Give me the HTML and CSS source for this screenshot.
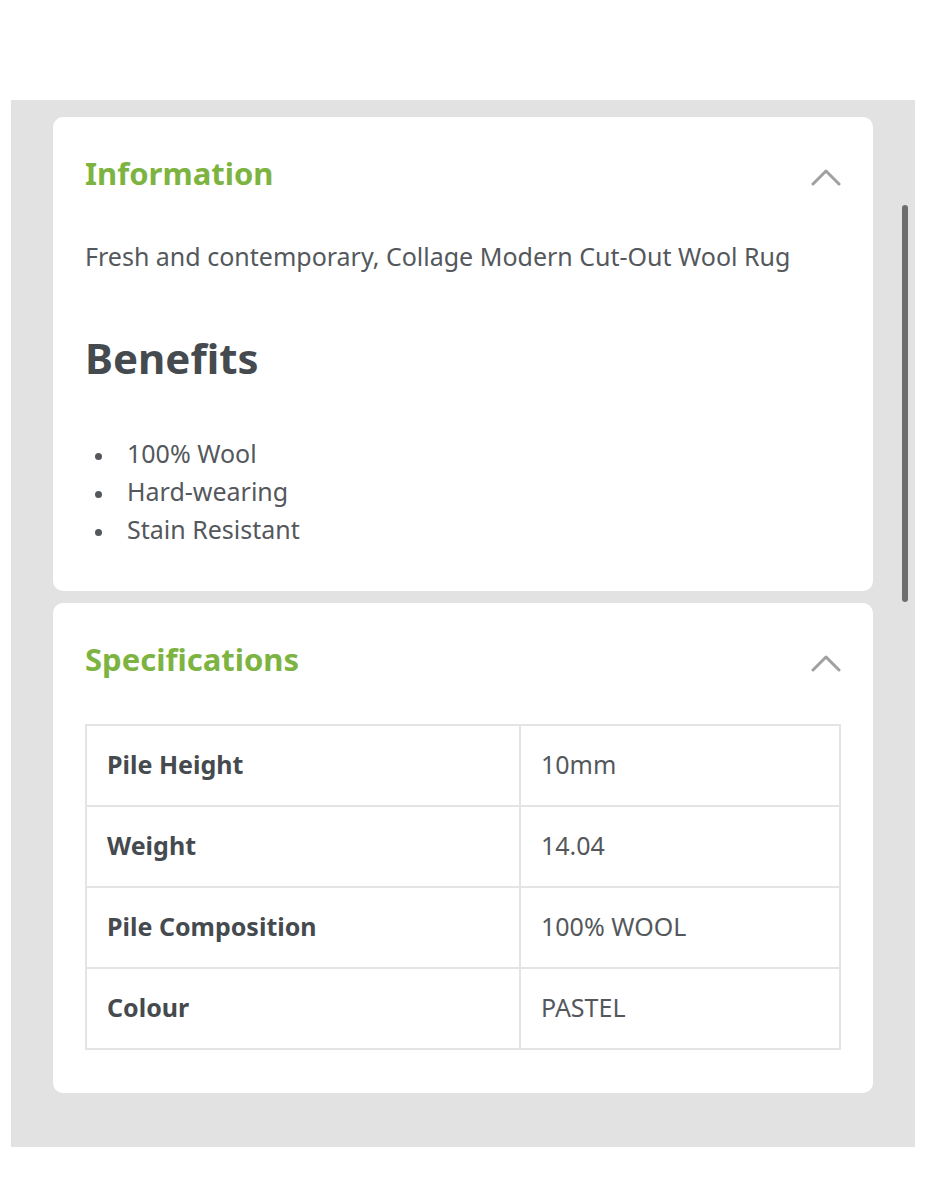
FILE: index.html
```html
<!DOCTYPE html>
<html lang="en">
<head>
<meta charset="utf-8">
<title>Product details</title>
<link rel="stylesheet" href="styles.css">
</head>
<body>
<div class="panel">
  <section class="card card-info">
    <div class="card-head">
      <h2 class="card-title">Information</h2>
      <svg class="chevron" width="30" height="18" viewBox="0 0 30 18"><polyline points="2,16 15,3 28,16" fill="none" stroke="#a0a0a0" stroke-width="3" stroke-linecap="round" stroke-linejoin="round"/></svg>
    </div>
    <p class="desc">Fresh and contemporary, Collage Modern Cut-Out Wool Rug</p>
    <h3 class="benefits">Benefits</h3>
    <ul class="list">
      <li>100% Wool</li>
      <li>Hard-wearing</li>
      <li>Stain Resistant</li>
    </ul>
  </section>
  <section class="card card-spec">
    <div class="card-head">
      <h2 class="card-title">Specifications</h2>
      <svg class="chevron" width="30" height="18" viewBox="0 0 30 18"><polyline points="2,16 15,3 28,16" fill="none" stroke="#a0a0a0" stroke-width="3" stroke-linecap="round" stroke-linejoin="round"/></svg>
    </div>
    <table class="spec">
      <tr><th>Pile Height</th><td>10mm</td></tr>
      <tr><th>Weight</th><td>14.04</td></tr>
      <tr><th>Pile Composition</th><td>100% WOOL</td></tr>
      <tr><th>Colour</th><td>PASTEL</td></tr>
    </table>
  </section>
  <div class="scroll-thumb"></div>
</div>
</body>
</html>
```
FILE: styles.css
```css
html, body {
  margin: 0;
  padding: 0;
  background: #ffffff;
}
body {
  font-family: "Noto Sans", "Open Sans", sans-serif;
  color: #54585c;
}
.panel {
  position: relative;
  margin: 100px 0 0 11px;
  width: 904px;
  height: 1047px;
  box-sizing: border-box;
  background: #e2e2e2;
  padding: 17px 42px 0 42px;
  display: flex;
  flex-direction: column;
  gap: 12px;
}
.card {
  background: #ffffff;
  border-radius: 10px;
  padding: 36px 32px 0 32px;
}
.card-info { padding-bottom: 43px; }
.card-spec { padding-bottom: 43px; }
.card-head {
  display: flex;
  justify-content: space-between;
  align-items: center;
  height: 40px;
}
.card-title {
  margin: 0;
  font-size: 31px;
  line-height: 40px;
  font-weight: 700;
  color: #7db441;
}
.chevron {
  display: block;
  margin-top: 8px;
}
.desc {
  margin: 45px 0 0 0;
  font-size: 25px;
  line-height: 36px;
}
.benefits {
  margin: 58px 0 0 0;
  font-size: 42px;
  line-height: 52px;
  font-weight: 700;
  color: #454a4f;
}
.list {
  margin: 50px 0 0 0;
  padding: 0;
  list-style: none;
  font-size: 25px;
  line-height: 38px;
}
.list li::before {
  content: "";
  display: inline-block;
  width: 7px;
  height: 7px;
  border-radius: 50%;
  background: #54585c;
  margin: 0 25px 0 10px;
  vertical-align: middle;
}
.spec {
  margin-top: 45px;
  width: 100%;
  border-collapse: collapse;
  font-size: 25px;
}
.spec th, .spec td {
  border: 2px solid #e4e4e4;
  height: 81px;
  padding: 0 0 3px 20px;
  box-sizing: border-box;
  text-align: left;
  vertical-align: middle;
}
.spec th {
  width: 434px;
  font-weight: 700;
  color: #454a4f;
}
.spec td {
  font-weight: 400;
  color: #54585c;
}
.scroll-thumb {
  position: absolute;
  left: 891px;
  top: 105px;
  width: 6px;
  height: 397px;
  border-radius: 3px;
  background: #6e6e6e;
}
```
